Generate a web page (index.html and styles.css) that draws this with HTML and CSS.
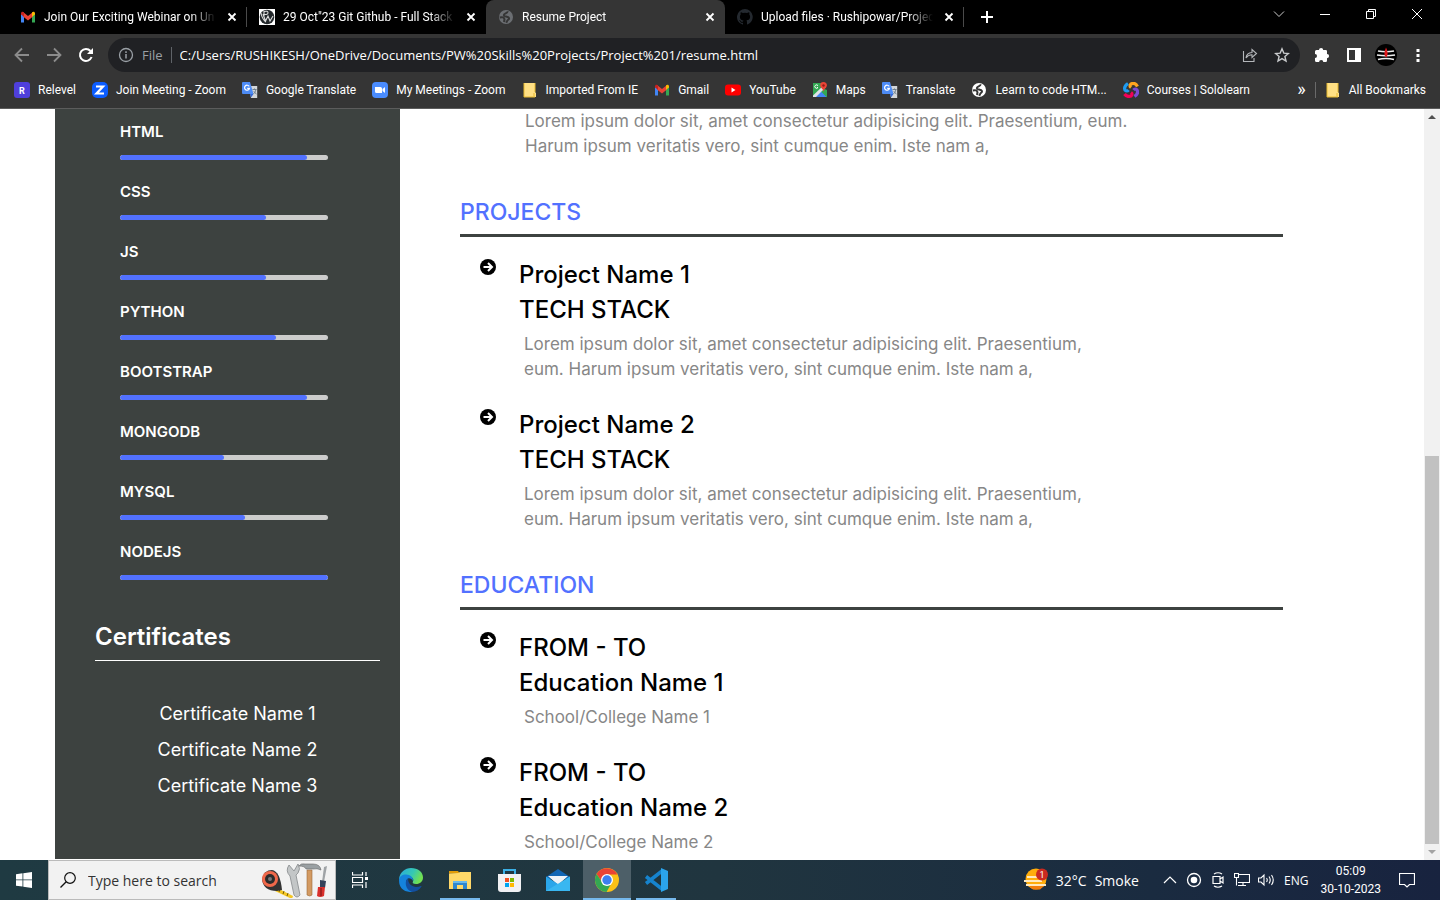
FILE: index.html
```html
<!DOCTYPE html>
<html lang="en">
<head>
<meta charset="utf-8">
<meta name="viewport" content="width=device-width, initial-scale=1">
<title>Resume Project</title>
<link rel="stylesheet" href="styles.css">
</head>
<body>
<svg class="defs" aria-hidden="true">
  <defs>
    <symbol id="gmail" viewBox="0 0 16 16"><path fill="#4285f4" d="M1 4v9.500h3V7z"/><path fill="#34a853" d="M12 7v6.500h3V4z"/><path fill="#ea4335" d="M3 3l5 4 5-4v4.500L8 11.500 3 7.500z"/><path fill="#c5221f" d="M1 4.500C1 2.500 3 2 4 3.500v4.300L1 5.500z"/><path fill="#fbbc04" d="M15 4.500C15 2.500 13 2 12 3.500v4.300l3-2.300z"/></symbol>
    <symbol id="globe" viewBox="0 0 16 16"><circle cx="8" cy="8" r="7" fill="currentColor"/><path d="M9.500 2.200C10 4.500 5.800 4.300 5.800 6.300c0 1.500 4.400.7 5.200 2.700.5 1.500-1.500 1.800-2 3.200l-.8 1.600M1.800 8.500c2.500-.8 4.500 0 4.700 1.800L6 13" class="land"/></symbol>
    <symbol id="translate" viewBox="0 0 16 16"><path fill="#d3d6d9" d="M7 4h8.200v12H9z"/><path fill="#4d8bf5" d="M1 0h7l3.500 12H1Q0 12 0 11V1Q0 0 1 0z"/><path fill="#3367d6" d="M8 12h3.500L9 15.500z"/><path d="M7.200 4.400A2.500 2.500 0 1 0 7.500 6.300H5.200" fill="none" stroke="#fff" stroke-width="1.200"/><path d="M10.500 7.500h4M12.500 6.500v1M14 7.600q-.8 3-2.500 4.300M11.800 9.300l2.700 3" fill="none" stroke="#687887" stroke-width=".9"/></symbol>
    <symbol id="folder" viewBox="0 0 16 16"><path fill="#ffe084" d="M2 1h11v9l1 1v4H2z"/><path d="M2 1v14h11M13 1v9M12 14.500V11" stroke="#e7b92e" fill="none"/></symbol>
    <symbol id="close" viewBox="0 0 16 16"><path d="M4.500 4.500l7 7M11.500 4.500l-7 7" stroke="currentColor" stroke-width="1.800"/></symbol>
    <symbol id="arrow" viewBox="0 0 16 16"><circle cx="8" cy="8" r="8"/><path d="M3.500 8h8M8 4l4 4-4 4" fill="none" stroke="#fff" stroke-width="2"/></symbol>
  </defs>
</svg>

<header class="browser">
  <div class="tabstrip">
    <div class="tab"><svg class="i16"><use href="#gmail"/></svg><span class="tab-title">Join Our Exciting Webinar on Un</span><button class="close" aria-label="Close tab"><svg class="i16"><use href="#close"/></svg></button></div>
    <div class="tab"><svg class="i16" viewBox="0 0 16 16"><path fill="#fff" d="M0 0h16v16H0z"/><circle cx="8" cy="8" r="7.300" fill="#23282b"/><path d="M5 7V2.500q4-1 4 1.200T5 5.500M4 5l2.500 7L9 7l2 5 3-5M2 4q1 6 5 9" fill="none" stroke="#ddd" stroke-width="1.100"/></svg><span class="tab-title">29 Oct"23 Git Github - Full Stack</span><button class="close" aria-label="Close tab"><svg class="i16"><use href="#close"/></svg></button></div>
    <div class="tab active"><svg class="i16 globe-dim"><use href="#globe"/></svg><span class="tab-title">Resume Project</span><button class="close" aria-label="Close tab"><svg class="i16"><use href="#close"/></svg></button></div>
    <div class="tab"><svg class="i16" viewBox="0 0 16 16"><path fill="#24292f" d="M8 0a8 8 0 0 0-2.500 15.600c.4.100.5-.2.500-.4v-1.400c-2.200.5-2.700-1-2.700-1-.4-.9-.9-1.200-.9-1.200-.7-.5.100-.5.100-.5.800.1 1.200.8 1.200.8.700 1.300 1.900.9 2.300.7.100-.5.300-.9.500-1.100-1.800-.2-3.600-.9-3.600-4 0-.9.300-1.600.8-2.100-.1-.2-.4-1 .1-2.100 0 0 .7-.2 2.200.8a7.500 7.500 0 0 1 4 0c1.500-1 2.200-.8 2.200-.8.400 1.100.2 1.900.1 2.100.5.600.8 1.300.8 2.100 0 3.100-1.900 3.700-3.700 3.900.3.300.6.800.6 1.500v2.200c0 .2.100.5.500.4A8 8 0 0 0 8 0z"/></svg><span class="tab-title">Upload files · Rushipowar/Projec</span><button class="close" aria-label="Close tab"><svg class="i16"><use href="#close"/></svg></button></div>
    <button class="newtab" aria-label="New tab"><svg class="i16" viewBox="0 0 16 16"><path d="M8 2v12M2 8h12" stroke="#fff" stroke-width="2"/></svg></button>
    <div class="wincontrols">
      <button aria-label="Search tabs"><svg class="i16" viewBox="0 0 16 16"><path d="M3 5.500l5 5 5-5" fill="none" stroke="#ccc"/></svg></button>
      <button aria-label="Minimize"><svg class="i16" viewBox="0 0 16 16"><path d="M3 8.500h10" stroke="#fff"/></svg></button>
      <button aria-label="Restore"><svg class="i16" viewBox="0 0 16 16"><path d="M3.500 5.500h7v7h-7zM5.500 5.500v-2h7v7h-2" fill="none" stroke="#fff"/></svg></button>
      <button aria-label="Close"><svg class="i16" viewBox="0 0 16 16"><path d="M3 3l10 10M13 3L3 13" stroke="#fff"/></svg></button>
    </div>
  </div>

  <div class="toolbar">
    <div class="nav">
      <button class="dim" aria-label="Back"><svg class="i16" viewBox="0 0 16 16"><path d="M15 8H2M8 1.500L1.500 8 8 14.500" fill="none" stroke="currentColor" stroke-width="1.800"/></svg></button>
      <button class="dim" aria-label="Forward"><svg class="i16" viewBox="0 0 16 16"><path d="M1 8h13M8 1.500L14.500 8 8 14.500" fill="none" stroke="currentColor" stroke-width="1.800"/></svg></button>
      <button aria-label="Reload"><svg class="i16" viewBox="0 0 16 16"><path d="M13.600 10A6 6 0 1 1 12.500 4" fill="none" stroke="currentColor" stroke-width="2"/><path d="M15 1v6H9z" fill="currentColor"/></svg></button>
    </div>
    <div class="omnibox">
      <svg class="i16" viewBox="0 0 16 16"><circle cx="8" cy="8" r="6.500" fill="none" stroke="#9aa0a6" stroke-width="1.300"/><path d="M8 7v4.500M8 4.300V6" stroke="#9aa0a6" stroke-width="1.500"/></svg>
      <label class="scheme" for="url">File</label>
      <input id="url" type="text" value="C:/Users/RUSHIKESH/OneDrive/Documents/PW%20Skills%20Projects/Project%201/resume.html">
      <button aria-label="Share"><svg class="i16" viewBox="0 0 16 16"><path d="M1.500 4v10.500H12V11M4 11q.5-5 6-5.500V2.500L14.500 6.500 10 10.500V7.800Q6 8 4 11z" fill="none" stroke="#b4b7ba" stroke-width="1.100"/></svg></button>
      <button aria-label="Bookmark this page"><svg class="i16" viewBox="0 0 16 16"><path d="M8 1.800l1.800 4.300 4.600.4-3.500 3 1.100 4.500L8 11.600 4 14l1.100-4.500-3.500-3 4.600-.4z" fill="none" stroke="#c8cacc" stroke-width="1.400"/></svg></button>
    </div>
    <div class="actions">
      <button aria-label="Extensions"><svg class="i16" viewBox="0 0 16 16"><path fill="#fff" d="M1 4.500Q1 3 2.500 3H5a2 2 0 0 1 4.200 0h2.500q1.300 0 1.300 1.300V7a2 2 0 0 1 0 4.200v2.300q0 1.500-1.300 1.500H9.300a2 2 0 0 0-4.200 0H2.500Q1 15 1 13.500V11a2 2 0 0 0 0-4z"/></svg></button>
      <button aria-label="Side panel"><svg class="i16" viewBox="0 0 16 16"><path fill="#fff" fill-rule="evenodd" d="M1 1h14v14H1zM3 3v10h6V3z"/></svg></button>
      <button aria-label="Profile"><svg class="i22" viewBox="0 0 22 22"><circle cx="11" cy="11" r="11" fill="#000"/><path d="M3 7q8 1.500 16 0M2 11q9 1.500 18 0M3 15.500q8-2 16 0" fill="none" stroke="#eee" stroke-width="1.700"/><path d="M11 3.500q3 6 .5 10-4-2-.5-10z" fill="#e3191c"/></svg></button>
      <button aria-label="Menu"><svg class="i16" viewBox="0 0 16 16"><path fill="#fff" d="M6.500 2h3v3h-3zM6.500 7h3v3h-3zM6.500 12h3v3h-3z"/></svg></button>
    </div>
  </div>

  <nav class="bookmarks" aria-label="Bookmarks">
    <a href="#"><svg class="i16" viewBox="0 0 16 16"><rect width="16" height="16" rx="3" fill="#4f3fdb"/><text x="8" y="11.500" class="logo-r">R</text></svg>Relevel</a>
    <a href="#"><svg class="i16" viewBox="0 0 16 16"><rect width="16" height="16" rx="5" fill="#0b5cff"/><path d="M4 4.500h7L4.500 11.500H12" fill="none" stroke="#fff" stroke-width="2.200"/></svg>Join Meeting - Zoom</a>
    <a href="#"><svg class="i16"><use href="#translate"/></svg>Google Translate</a>
    <a href="#"><svg class="i16" viewBox="0 0 16 16"><rect width="16" height="16" rx="4" fill="#4a8cff"/><path d="M3 5h5.500Q10 5 10 6.500V11H4.500Q3 11 3 9.500zM10.500 7L13 5v6l-2.500-2z" fill="#fff"/></svg>My Meetings - Zoom</a>
    <a href="#"><svg class="i16"><use href="#folder"/></svg>Imported From IE</a>
    <a href="#"><svg class="i16"><use href="#gmail"/></svg>Gmail</a>
    <a href="#"><svg class="i16" viewBox="0 0 16 16"><rect y="2.500" width="16" height="11" rx="3" fill="#f00"/><path d="M6.500 5.500v5L10.500 8z" fill="#fff"/></svg>YouTube</a>
    <a href="#"><svg class="i16" viewBox="0 0 16 16"><path fill="#34a853" d="M1 1h9v5l5 2v7H1z"/><path fill="#4285f4" d="M8 8.500l6.500 6.500H2z"/><path fill="#dfe3e6" d="M1 13.500L12 3l2 2L4 15H1z"/><path d="M6 3.700A1.700 1.700 0 1 0 6 5.500H5" fill="none" stroke="#fff"/><path fill="#ea4335" d="M11.500 0a3.400 3.400 0 0 0-3.300 3.700c.3 2.300 3 3 3.300 6 .4-3 3-3.700 3.400-6A3.400 3.400 0 0 0 11.500 0z"/><circle cx="11.500" cy="3.500" r="1.200" fill="#8c1d18"/></svg>Maps</a>
    <a href="#"><svg class="i16"><use href="#translate"/></svg>Translate</a>
    <a href="#"><svg class="i16 globe-light"><use href="#globe"/></svg>Learn to code HTM...</a>
    <a href="#"><svg class="i16" viewBox="0 0 16 16" fill="none" stroke-width="3.200"><path d="M8 5.500Q6 4 8 2q4-2 6.500 2.500" stroke="#ffa51f"/><path d="M10.500 8Q12 6 14 8q2 3.500-2.500 6.500" stroke="#7b4bd6"/><path d="M8 10.500Q10 12 8 14q-4 1.500-6.500-2" stroke="#f50057"/><path d="M5.500 8Q4 10 2 8 .5 4.500 5 1.500" stroke="#1e9bf0"/></svg>Courses | Sololearn</a>
    <button class="more" aria-label="More bookmarks">»</button>
    <a href="#" class="all"><svg class="i16"><use href="#folder"/></svg>All Bookmarks</a>
  </nav>
</header>

<div class="viewport">
  <div class="resume">
    <aside class="sidebar">
      <ul class="skills">
        <li><h3>HTML</h3><div class="bar"><div class="fill" style="width:90%"></div></div></li>
        <li><h3>CSS</h3><div class="bar"><div class="fill" style="width:70%"></div></div></li>
        <li><h3>JS</h3><div class="bar"><div class="fill" style="width:70%"></div></div></li>
        <li><h3>PYTHON</h3><div class="bar"><div class="fill" style="width:75%"></div></div></li>
        <li><h3>BOOTSTRAP</h3><div class="bar"><div class="fill" style="width:90%"></div></div></li>
        <li><h3>MONGODB</h3><div class="bar"><div class="fill" style="width:50%"></div></div></li>
        <li><h3>MYSQL</h3><div class="bar"><div class="fill" style="width:60%"></div></div></li>
        <li><h3>NODEJS</h3><div class="bar"><div class="fill" style="width:100%"></div></div></li>
      </ul>
      <section class="certs">
        <h2>Certificates</h2>
        <ul>
          <li>Certificate Name 1</li>
          <li>Certificate Name 2</li>
          <li>Certificate Name 3</li>
        </ul>
      </section>
    </aside>
    <main class="main">
      <p class="desc lead">Lorem ipsum dolor sit, amet consectetur adipisicing elit. Praesentium, eum.<br>Harum ipsum veritatis vero, sint cumque enim. Iste nam a,</p>
      <section class="block">
        <h2>PROJECTS</h2>
        <article class="entry"><svg class="i16"><use href="#arrow"/></svg><div><h3>Project Name 1</h3><h3>TECH STACK</h3><p class="desc">Lorem ipsum dolor sit, amet consectetur adipisicing elit. Praesentium,<br>eum. Harum ipsum veritatis vero, sint cumque enim. Iste nam a,</p></div></article>
        <article class="entry"><svg class="i16"><use href="#arrow"/></svg><div><h3>Project Name 2</h3><h3>TECH STACK</h3><p class="desc">Lorem ipsum dolor sit, amet consectetur adipisicing elit. Praesentium,<br>eum. Harum ipsum veritatis vero, sint cumque enim. Iste nam a,</p></div></article>
      </section>
      <section class="block">
        <h2>EDUCATION</h2>
        <article class="entry"><svg class="i16"><use href="#arrow"/></svg><div><h3>FROM - TO</h3><h3>Education Name 1</h3><p class="desc">School/College Name 1</p></div></article>
        <article class="entry"><svg class="i16"><use href="#arrow"/></svg><div><h3>FROM - TO</h3><h3>Education Name 2</h3><p class="desc">School/College Name 2</p></div></article>
      </section>
    </main>
  </div>
  <div class="scrollbar" aria-hidden="true">
    <svg class="i16" viewBox="0 0 16 16"><path d="M4 10l4-4 4 4z" fill="#505050"/></svg>
    <div class="track"><div class="thumb"></div></div>
    <svg class="i16" viewBox="0 0 16 16"><path d="M4 6l4 4 4-4z" fill="#a3a3a3"/></svg>
  </div>
</div>

<footer class="taskbar">
  <button class="app" aria-label="Start"><svg class="i16" viewBox="0 0 16 16"><path fill="#fff" d="M0 2.200L6.500 1.300v6.200H0zM7.300 1.200L16 0v7.500H7.300zM0 8.300h6.500v6.300L0 13.700zM7.300 8.300H16V16l-8.700-1.200z"/></svg></button>
  <div class="search">
    <svg class="i16" viewBox="0 0 16 16"><circle cx="10" cy="6" r="5.300" fill="none" stroke="#111" stroke-width="1.200"/><path d="M6.200 9.800L.5 15.500" stroke="#111" stroke-width="1.300"/></svg>
    <input type="text" placeholder="Type here to search" aria-label="Type here to search">
    <svg class="tools" viewBox="0 0 68 36">
      <path d="M16 26l16 8-1 3-17-8z" fill="#f3c623"/><path d="M19 27l-1 3M23 29l-1 3M27 31l-1 3" stroke="#7a5d00"/>
      <path d="M1 17Q3 8 11 8q8 1 10 20l-5 1Q2 29 1 17z" fill="#333"/><circle cx="9" cy="17" r="8" fill="#f0684a"/><circle cx="9" cy="17" r="5" fill="#2b2b2b"/><circle cx="9" cy="17" r="2" fill="#777"/>
      <path d="M28 3l5 6 4-7q3 5 0 9l-2 2 4 20q-3 4-6 0l-4-19q-5-5-1-11z" fill="#c3c6c7" stroke="#85898b" stroke-width=".8"/>
      <path d="M46 8h5v25q-2 2-5 0z" fill="#d39a62" stroke="#9b6a3b" stroke-width=".6"/><path d="M38 4q2-3 6-2h8q7 0 8 6-4-2-8-1h-7q-1-3-7-3z" fill="#9aa0a3" stroke="#666" stroke-width=".6"/>
      <path d="M63 5l3-1-3 16h-2z" fill="#9fa3a6"/><path d="M59 18l6 1-1 7h-5z" fill="#34425a"/><path d="M57 25h7l-1 9q-4 2-7 0z" fill="#d9302c"/><path d="M60 26v8" stroke="#741512"/>
    </svg>
  </div>
  <button class="app" aria-label="Task view"><svg class="i16" viewBox="0 0 16 16"><path d="M.5 0v3h10V0M.5 16v-3h10v3M.5 5.500h10v5H.5zM14 0v4M14 10v6" fill="none" stroke="#fff" stroke-width="1.200"/><path d="M13 5h3v3h-3z" fill="#fff"/></svg></button>
  <div class="apps">
    <button class="app" aria-label="Microsoft Edge"><svg class="i24" viewBox="0 0 24 24"><defs><linearGradient id="eg" x1="0" y1="0" x2="1" y2=".4"><stop offset="0" stop-color="#2aa8e0"/><stop offset=".6" stop-color="#35c8b4"/><stop offset="1" stop-color="#71e052"/></linearGradient></defs><path d="M0 11C1 4 6 0 12 0c7 0 12 4 12 9.500 0 4-3 6.500-7 6.500-3 0-4-1.500-3-2.500 1-2 0-4-3-5z" fill="url(#eg)"/><path d="M0 12C0 8.500 3.500 6.500 7 6.500c4.500 0 7.500 3 7 6.500-1-2-3-3-5-2.500-3 1-3 9 5 13.300Q12 24 11 24 0 23 0 12z" fill="#1583dc"/><path d="M9.500 10.300C5 12 6 22 13 23.900c4 0 7.500-2 9.500-5.400.2-.5-.2-.8-.7-.5-2 1-4 1.300-6 .8-4.500-.8-7.500-5-6.300-8.500z" fill="#134f9f"/></svg></button>
    <button class="app open" aria-label="File Explorer"><svg class="i24" viewBox="0 0 24 24"><path fill="#e19b08" d="M1 3h9l1.500 2.500H1z"/><path fill="#ffd869" d="M1 5.500L10 5l2-1h11v17H1z"/><path fill="#2f86cf" d="M5 21v-8h14v8h-4v-4H9v4z"/><path fill="#69b8ec" d="M5 13h14v2H5z"/></svg></button>
    <button class="app" aria-label="Microsoft Store"><svg class="i24" viewBox="0 0 24 24"><path d="M7 7V2h11v5" fill="none" stroke="#3bb0e6" stroke-width="2"/><path d="M1 6h23v15q0 3-3 3H4q-3 0-3-3z" fill="#f1f1f3"/><path fill="#f25022" d="M8 10h4v4H8z"/><path fill="#7fba00" d="M13 10h4v4h-4z"/><path fill="#00a4ef" d="M8 15h4v4H8z"/><path fill="#ffb900" d="M13 15h4v4h-4z"/></svg></button>
    <button class="app" aria-label="Mail"><svg class="i24" viewBox="0 0 24 24"><path fill="#1266b4" d="M0 9l12-8 12 8v2H0z"/><path fill="#eef3f7" d="M2 8h20l-10 9z"/><path fill="#2aa6ea" d="M0 8.500l12 7.500 12-7.500V23H0z"/><path fill="#45c3f5" d="M0 23L24 8.500V23z" opacity=".6"/></svg></button>
    <button class="app current" aria-label="Google Chrome"><svg class="i24" viewBox="0 0 24 24"><circle cx="12" cy="12" r="12" fill="#fbc116"/><path fill="#ea4335" d="M1.600 6A12 12 0 0 1 22.400 6.500H12L7 14z"/><path fill="#34a853" d="M7 14l-5.400-8A12 12 0 0 0 11.500 24L16 16z"/><circle cx="12" cy="12" r="6" fill="#fff"/><circle cx="12" cy="12" r="4.700" fill="#3d7ff0"/></svg></button>
    <button class="app open" aria-label="Visual Studio Code"><svg class="i24" viewBox="0 0 24 24"><path d="M2 8.500L18 21M2 15.500L18 3" stroke="#1684ce" stroke-width="3.500"/><path fill="#2ba4ec" d="M17 0l7 3v18l-7 3z"/><path fill="#20363e" d="M17 7v10l-6.500-5z"/></svg></button>
  </div>
  <div class="tray">
    <button class="weather"><svg class="i24" viewBox="0 0 24 24"><circle cx="12" cy="11" r="10.500" fill="#ffad0c"/><path d="M4 17h17l-5 4.500H9z" fill="#f27d0c"/><path d="M3 9h13M0 13h18M2 17h20" stroke="#ffe9bf" stroke-width="1.800"/><circle cx="18" cy="6.500" r="6" fill="#cb2a20"/><text x="18" y="10" class="badge-n">1</text></svg><span>32°C</span><span>Smoke</span></button>
    <svg class="i16" viewBox="0 0 16 16"><path d="M2 11l6-6 6 6" fill="none" stroke="#fff" stroke-width="1.200"/></svg>
    <svg class="i16" viewBox="0 0 16 16"><circle cx="8" cy="8" r="6.500" fill="none" stroke="#fff" stroke-width="1.300"/><circle cx="8" cy="8" r="3.300" fill="#fff"/></svg>
    <svg class="i16" viewBox="0 0 16 16"><path d="M3 4.500h7v7H3zM10 7l3-2v6l-3-2M4 2q4-2.500 8 0M4 14q4 2.500 8 0" fill="none" stroke="#fff" stroke-width="1.200"/></svg>
    <svg class="i16" viewBox="0 0 16 16"><path d="M5 2.500h10.500v8H4M4 13.500h8M9 10.500v3M.5 1.500h4v4h-4zM2.500 5.500v8" fill="none" stroke="#fff" stroke-width="1.100"/></svg>
    <svg class="i16" viewBox="0 0 16 16"><path d="M.5 6v4H3l3 3V3L3 6zM8.500 6q1.500 2 0 4M11 4.500q2.500 3.500 0 7M13.500 3q3.500 5 0 10" fill="none" stroke="#fff" stroke-width="1.100"/></svg>
    <span class="lang">ENG</span>
    <time class="clock" datetime="2023-10-30T05:09">05:09<br>30-10-2023</time>
    <button class="notif" aria-label="Notifications"><svg class="i16" viewBox="0 0 16 16"><path d="M.5 1.500h15v11h-5L8 15l-2.500-2.500h-5z" fill="none" stroke="#fff" stroke-width="1.200"/></svg></button>
  </div>
</footer>
</body>
</html>
```
FILE: styles.css
```css
* { box-sizing: border-box; }
body { margin: 0; height: 100vh; display: flex; flex-direction: column; overflow: hidden; background: #fff; font-family: "Open Sans", "Noto Sans", sans-serif; font-size: 12px; color: #fff; }
button { border: 0; padding: 0; background: none; color: inherit; font: inherit; display: flex; align-items: center; justify-content: center; }
input { border: 0; padding: 0; background: none; font: inherit; color: inherit; outline: 0; min-width: 0; }
a { color: inherit; text-decoration: none; }
h2, h3, p, ul { margin: 0; padding: 0; }
ul { list-style: none; }
svg { flex: none; display: block; }
.defs { position: absolute; width: 0; height: 0; }
.i16 { width: 16px; height: 16px; }
.i22 { width: 22px; height: 22px; }
.i24 { width: 24px; height: 24px; }

.browser { flex: none; background: #353535; border-bottom: 1px solid #5c5c5c; font-family: Roboto, "Open Sans", sans-serif; }
.tabstrip { display: flex; height: 34px; background: #000; padding-left: 8px; }
.tab { flex: 0 1 239px; display: flex; align-items: center; gap: 8px; padding: 0 7px 0 12px; background: linear-gradient(#4a4a4a, #4a4a4a) right center / 1px 20px no-repeat; min-width: 0; }
.tab:nth-child(2) { background: none; }
.tab.active { background: #353535; border-radius: 8px 8px 0 0; }
.tab-title { flex: 1; min-width: 0; white-space: nowrap; -webkit-mask-image: linear-gradient(90deg, #000 85%, transparent); mask-image: linear-gradient(90deg, #000 85%, transparent); }
.globe-dim { color: #6b6e72; }
.land { fill: none; stroke: #353535; stroke-width: 2; stroke-linejoin: round; }
.globe-light { color: #fff; }
.newtab { width: 46px; }
.wincontrols { margin-left: auto; display: flex; height: 28px; }
.wincontrols button { width: 46px; }

.toolbar { display: flex; align-items: center; height: 42px; }
.nav { display: flex; gap: 16px; padding: 0 14px; }
.dim { color: #8c8c8c; }
.omnibox { flex: 1; display: flex; align-items: center; height: 34px; padding: 0 10px; border-radius: 17px; background: #202124; font-family: "Open Sans", "Noto Sans", sans-serif; font-size: 13px; gap: 8px; }
.scheme { color: #9aa0a6; padding-right: 8px; border-right: 1px solid #5f6368; line-height: 16px; }
.omnibox input { flex: 1; }
.omnibox button + button { margin-left: 8px; }
.actions { display: flex; align-items: center; gap: 10px; padding: 0 11px; }
.actions button { width: 22px; }

.bookmarks { display: flex; align-items: center; gap: 16px; height: 32px; padding: 0 14px 4px; white-space: nowrap; }
.bookmarks a { display: flex; align-items: center; gap: 8px; }
.logo-r { font: 700 9px Roboto, sans-serif; fill: #fff; text-anchor: middle; }
.more { margin-left: auto; font-size: 18px; line-height: 16px; padding-bottom: 3px; }
.all { border-left: 1px solid #6a6a6a; padding-left: 9px; }
.more + .all { margin-left: -7px; }

.viewport { flex: 1; min-height: 0; display: flex; font-family: Inter, "Open Sans", sans-serif; }
.resume { flex: 1; min-width: 0; overflow: hidden; display: flex; padding: 0 55px 1px; }
.sidebar { flex: 0 0 345px; background: #3d4240; padding: 11px 20px 0 40px; }
.skills { display: flex; flex-direction: column; gap: 20px; padding: 0 52px 0 25px; }
.skills h3 { font-size: 15px; line-height: 24px; font-weight: 600; margin-bottom: 11px; }
.bar { height: 5px; border-radius: 3px; background: #ccc; overflow: hidden; }
.fill { height: 5px; border-radius: 3px; background: #5271ff; }
.certs { margin-top: 39px; }
.certs h2 { font-size: 24px; line-height: 36px; font-weight: 600; padding-bottom: 5px; border-bottom: 1px solid #fff; }
.certs ul { padding-top: 35px; text-align: center; font-size: 18px; line-height: 36px; }

.main { flex: 1; min-width: 0; padding: 0 86px 0 60px; }
.desc { font-size: 17px; line-height: 25px; color: #878787; padding-left: 5px; }
.lead { padding-left: 65px; }
.block { color: #000; margin-bottom: 35px; }
.block h2 { font-size: 23px; line-height: 36px; font-weight: 500; color: #5271ff; padding-bottom: 4px; border-bottom: 3px solid #3d4240; }
.lead + .block { padding-top: 35px; }
.entry { display: flex; gap: 23px; padding: 20px 0 0 20px; }
.entry + .entry { padding-top: 25px; }
.entry > svg { margin-top: 2px; }
.entry h3 { font-size: 24px; line-height: 35px; font-weight: 500; }
.entry .desc { padding-top: 5px; }

.scrollbar { flex: none; width: 16px; background: #f1f1f1; display: flex; flex-direction: column; }
.track { flex: 1; display: flex; flex-direction: column; justify-content: flex-end; }
.thumb { height: 54%; margin: 0 1px; background: #c1c1c1; }

.taskbar { flex: none; height: 40px; display: flex; background: linear-gradient(90deg, #1f3a42, #20353f 50%, #1a2b40 80%, #18233f); font-size: 14px; }
.app { width: 48px; flex: none; }
.search { flex: 0 0 288px; min-width: 0; display: flex; align-items: center; gap: 12px; padding: 0 6px 0 11px; background: #f2f2f2; border: 1px solid #bbb; color: #333; }
.search input { flex: 1; width: 0; }
.search input::placeholder { color: #333; opacity: 1; }
.tools { width: 68px; height: 36px; }
.apps { display: flex; margin-left: 3px; gap: 1px; }
.open { background: linear-gradient(#76b9ed, #76b9ed) center bottom / 40px 2px no-repeat; }
.current { background: linear-gradient(#76b9ed, #76b9ed) center bottom / 48px 2px no-repeat #4d5f68; }
.tray { margin-left: auto; display: flex; align-items: center; gap: 8px; padding-right: 25px; }
.weather { gap: 8px; margin-right: 15px; }
.badge-n { font: 9px Roboto, sans-serif; fill: #fff; text-anchor: middle; }
.lang { font-size: 12px; margin-left: 2px; }
.clock { font-family: Roboto, sans-serif; font-size: 12px; line-height: 18px; text-align: center; margin-left: 4px; }
.notif { margin-left: 10px; }
```
